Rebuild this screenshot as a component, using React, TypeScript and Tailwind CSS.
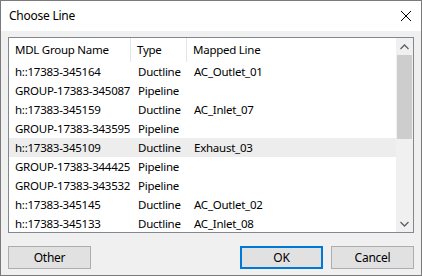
import React from "react";

const rows: [string, string, string][] = [
  ["h::17383-345164", "Ductline", "AC_Outlet_01"],
  ["GROUP-17383-345087", "Pipeline", ""],
  ["h::17383-345159", "Ductline", "AC_Inlet_07"],
  ["GROUP-17383-343595", "Pipeline", ""],
  ["h::17383-345109", "Ductline", "Exhaust_03"],
  ["GROUP-17383-344425", "Pipeline", ""],
  ["GROUP-17383-343532", "Pipeline", ""],
  ["h::17383-345145", "Ductline", "AC_Outlet_02"],
  ["h::17383-345133", "Ductline", "AC_Inlet_08"],
];

export default function App() {
  return (
    <div
      className="w-[422px] h-[276px] border border-[#7a7a7a] bg-[#f0f0f0] flex flex-col text-[11.5px] tracking-[-0.25px] text-black overflow-hidden"
      style={{ fontFamily: '"Noto Sans", "Open Sans", sans-serif' }}
    >
      <div className="h-[30px] bg-white flex items-center justify-between pl-[8px] pr-[9px] shrink-0">
        <span className="text-[12px]">Choose Line</span>
        <svg width="12" height="12" viewBox="0 0 12 12">
          <path d="M1 1 L11 11 M11 1 L1 11" stroke="#000" strokeWidth="1" fill="none" />
        </svg>
      </div>
      <div className="flex-1 flex flex-col px-[7px] pt-[6px] pb-[6px]">
        <div className="h-[196px] border border-[#828790] bg-white flex overflow-hidden shrink-0">
          <div className="flex-1 flex flex-col overflow-hidden">
            <div className="h-[24px] flex shrink-0">
              <div className="w-[122px] pl-[6px] flex items-center border-r border-[#e5e5e5] whitespace-nowrap">MDL Group Name</div>
              <div className="w-[56px] pl-[6px] flex items-center border-r border-[#e5e5e5]">Type</div>
              <div className="flex-1 pl-[6px] flex items-center">Mapped Line</div>
            </div>
            {rows.map((r, i) => (
              <div
                key={i}
                className={`h-[19px] flex items-center shrink-0 ${i === 4 ? "bg-[#ededed]" : ""}`}
              >
                <div className="w-[122px] pl-[6px] whitespace-nowrap">{r[0]}</div>
                <div className="w-[56px] pl-[7px] whitespace-nowrap">{r[1]}</div>
                <div className="flex-1 pl-[7px] whitespace-nowrap">{r[2]}</div>
              </div>
            ))}
          </div>
          <div className="w-[17px] bg-[#f0f0f0] flex flex-col shrink-0">
            <div className="h-[17px] flex items-center justify-center">
              <svg width="9" height="6" viewBox="0 0 9 6">
                <path d="M0.5 5 L4.5 1 L8.5 5" stroke="#606060" strokeWidth="1.3" fill="none" />
              </svg>
            </div>
            <div className="h-[84px] mx-[1px] bg-[#cdcdcd]" />
            <div className="flex-1" />
            <div className="h-[17px] flex items-center justify-center">
              <svg width="9" height="6" viewBox="0 0 9 6">
                <path d="M0.5 1 L4.5 5 L8.5 1" stroke="#606060" strokeWidth="1.3" fill="none" />
              </svg>
            </div>
          </div>
        </div>
        <div className="flex items-center justify-between mt-[13px]">
          <button className="w-[83px] h-[23px] border border-[#adadad] bg-[#e1e1e1] text-[12px]">Other</button>
          <div className="flex gap-[8px]">
            <button className="w-[83px] h-[23px] border-2 border-[#0078d7] bg-[#e1e1e1] text-[12px]">OK</button>
            <button className="w-[83px] h-[23px] border border-[#adadad] bg-[#e1e1e1] text-[12px]">Cancel</button>
          </div>
        </div>
      </div>
    </div>
  );
}
